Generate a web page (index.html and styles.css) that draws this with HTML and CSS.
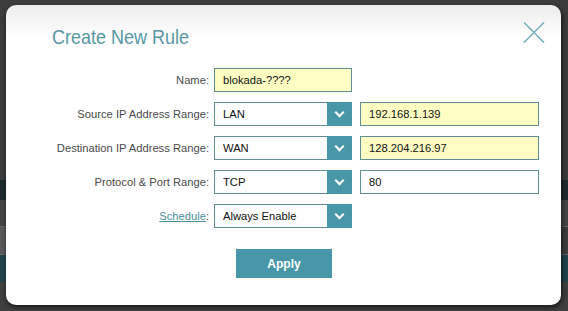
FILE: index.html
```html
<!DOCTYPE html>
<html lang="en">
<head>
  <meta charset="UTF-8" />
  <title>Create New Rule</title>
  <link rel="stylesheet" href="styles.css">
</head>
<body>
  <div class="backdrop">
    <div class="band band-top"></div>
    <div class="band band-dark"></div>
    <div class="band band-mid"></div>
    <div class="band band-light"></div>
    <div class="band band-teal"></div>
    <div class="band band-bottom"></div>
  </div>

  <div class="modal">
    <div class="modal-head">
      <h1>Create New Rule</h1>
      <button class="close-btn" type="button" aria-label="Close">
        <svg width="22" height="21" viewBox="0 0 22 21">
          <path d="M1 0.5 L21 20.5 M21 0.5 L1 20.5" stroke="#78b2bc" stroke-width="1.6" fill="none"/>
        </svg>
      </button>
    </div>

    <form class="rule-form">
      <label class="field-label" for="ruleName">Name:</label>
      <div class="field">
        <input class="text-input short filled" id="ruleName" type="text" value="blokada-????">
      </div>

      <label class="field-label">Source IP Address Range:</label>
      <div class="field">
        <div class="select-box"><span>LAN</span><i class="arrow"></i></div>
        <input class="text-input wide filled" type="text" value="192.168.1.139">
      </div>

      <label class="field-label">Destination IP Address Range:</label>
      <div class="field">
        <div class="select-box"><span>WAN</span><i class="arrow"></i></div>
        <input class="text-input wide filled" type="text" value="128.204.216.97">
      </div>

      <label class="field-label">Protocol &amp; Port Range:</label>
      <div class="field">
        <div class="select-box"><span>TCP</span><i class="arrow"></i></div>
        <input class="text-input wide" type="text" value="80">
      </div>

      <label class="field-label"><a href="#">Schedule</a>:</label>
      <div class="field">
        <div class="select-box"><span>Always Enable</span><i class="arrow"></i></div>
      </div>
    </form>

    <div class="actions">
      <button type="button" class="apply-btn">Apply</button>
    </div>
  </div>
</body>
</html>
```

FILE: styles.css
```css
body {
  margin: 0;
  width: 568px;
  height: 311px;
  overflow: hidden;
  position: relative;
  background: #3e3e3e;
  font-family: 'Liberation Sans', Arial, sans-serif;
}

/* dimmed page behind the dialog */
.backdrop {
  display: flex;
  flex-direction: column;
}

.band { width: 100%; }
.band-top { height: 180px; background: #3c3c3c; }
.band-dark { height: 20px; background: #1c2a2f; }
.band-mid { height: 26px; background: #454545; }
.band-light { height: 27px; background: linear-gradient(to right, #5a5a5a 0 20px, #3e3e3e 20px); border-top: 1px solid #666; border-bottom: 1px solid #666; }
.band-teal { height: 27px; background: #1f424b; }
.band-bottom { height: 30px; background: #3f3f3f; }

.modal {
  position: absolute;
  left: 6px;
  top: 5px;
  width: 555px;
  height: 300px;
  box-sizing: border-box;
  background: linear-gradient(to bottom, #ececec 0px, #ffffff 32px);
  border-radius: 10px;
  box-shadow: 1px 2px 5px rgba(0, 0, 0, 0.7);
}

.modal-head {
  display: flex;
  justify-content: space-between;
  align-items: flex-start;
  padding: 22px 16px 0 46px;
  height: 41px;
}

.modal-head h1 {
  margin: 0;
  font-size: 18px;
  font-weight: normal;
  color: #5797a5;
  line-height: 23px;
  transform: scaleY(1.08);
  transform-origin: left bottom;
}

.close-btn {
  background: none;
  border: none;
  padding: 0;
  margin-top: -5px;
  cursor: pointer;
  line-height: 0;
}

.rule-form {
  display: grid;
  grid-template-columns: 203px auto;
  column-gap: 5px;
  row-gap: 10px;
}

.field-label {
  font-size: 11.2px;
  color: #4a4a4a;
  text-align: right;
  line-height: 24px;
}

.field-label a {
  color: #4a8f9d;
}

.field {
  display: flex;
  gap: 8px;
}

.text-input {
  height: 24px;
  box-sizing: border-box;
  border: 1px solid #5f8f95;
  padding: 0 8px;
  font-family: inherit;
  font-size: 11.2px;
  color: #111;
  background: #fff;
  outline: none;
}

.text-input.filled { background: #ffffc4; }
.text-input.short { width: 138px; }
.text-input.wide { width: 179px; }

.select-box {
  width: 138px;
  height: 24px;
  box-sizing: border-box;
  border: 1px solid #5f8f95;
  display: flex;
  align-items: center;
  justify-content: space-between;
  background: #fff;
  font-size: 11.2px;
  color: #111;
}

.select-box span {
  padding-left: 8px;
}

.select-box .arrow {
  width: 25px;
  height: 24px;
  margin: -1px -1px -1px 0;
  background: #4897a8;
  position: relative;
}

.select-box .arrow::after {
  content: '';
  position: absolute;
  left: 9px;
  top: 7px;
  width: 5px;
  height: 5px;
  border-right: 2px solid #fff;
  border-bottom: 2px solid #fff;
  transform: rotate(45deg);
}

.actions {
  display: flex;
  margin-top: 21px;
  padding-left: 230px;
}

.apply-btn {
  width: 96px;
  height: 29px;
  border: none;
  background: #4897a8;
  color: #fff;
  font-family: inherit;
  font-size: 12px;
  font-weight: bold;
  cursor: pointer;
}
```
